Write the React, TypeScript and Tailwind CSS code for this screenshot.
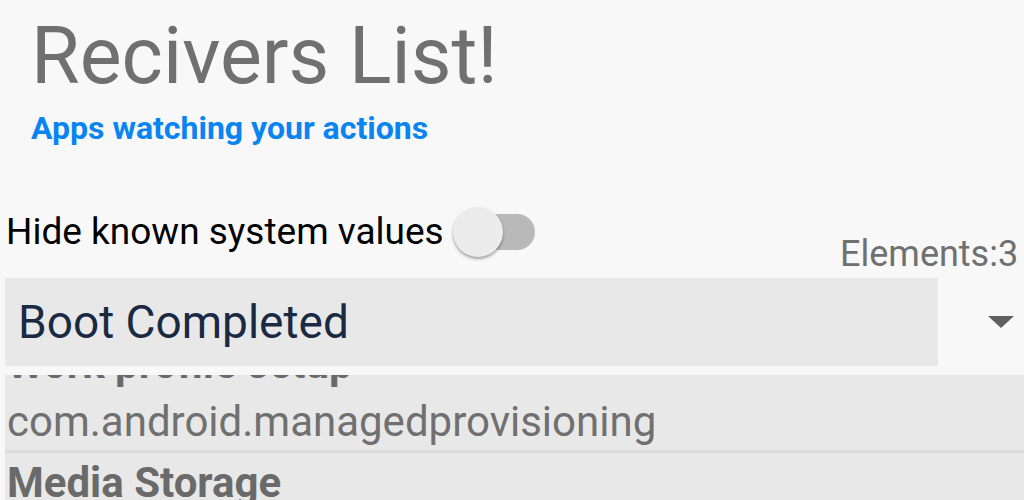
import React, { useState } from 'react';

const receivers = [
  { name: 'Work profile setup', pkg: 'com.android.managedprovisioning' },
  { name: 'Media Storage', pkg: 'com.android.providers.media' },
];

export default function App() {
  const [hideSystem, setHideSystem] = useState(false);

  return (
    <div className="w-[1024px] h-[500px] overflow-hidden bg-[#f8f8f8] font-['Roboto',sans-serif]">
      {/* Header */}
      <div className="pl-[31px] pt-[10px]">
        <h1 className="text-[79px] leading-[92px] text-[#707070] font-normal">Recivers List!</h1>
        <p className="text-[32px] leading-[40px] font-bold text-[#0a84f0] mt-[6px]">Apps watching your actions</p>
      </div>

      {/* Toggle row */}
      <div className="mt-[59px] pl-[6px] flex items-center h-[50px]">
        <span className="text-[37px] text-black whitespace-nowrap">Hide known system values</span>
        <button
          onClick={() => setHideSystem(!hideSystem)}
          className="relative ml-[9px] w-[82px] h-[50px]"
        >
          <span className="absolute left-[16px] top-[7px] w-[66px] h-[36px] rounded-full bg-[#b9b9b9]" />
          <span
            className={`absolute top-0 w-[50px] h-[50px] rounded-full bg-[#ececec] shadow-[0_2px_3px_rgba(0,0,0,0.35)] ${
              hideSystem ? 'left-[32px]' : 'left-0'
            }`}
          />
        </button>
      </div>

      <div className="-mt-[23px] h-[40px] overflow-hidden">
        <span className="block pl-[840px] text-[36px] leading-[40px] text-[#707070] whitespace-nowrap">Elements:3</span>
      </div>

      {/* Spinner */}
      <div className="flex items-center h-[88px] mt-[4px]">
        <div className="ml-[5px] w-[933px] h-full bg-[#e8e8e8] flex items-center pl-[13px]">
          <span className="text-[46px] text-[#1a2a42]">Boot Completed</span>
        </div>
        <div className="flex-1 flex justify-center pl-[40px]">
          <svg width="26" height="13" viewBox="0 0 26 13">
            <polygon points="0,0 26,0 13,12" fill="#606060" />
          </svg>
        </div>
      </div>

      {/* Receiver list (scrolled) */}
      <div className="mt-[9px] ml-[5px] h-[125px] overflow-hidden bg-[#e8e8e8]">
        <div className="-mt-[41px]">
          {receivers.map((r) => (
            <div key={r.pkg} className="border-b-[3px] border-[#dcdcdc]">
              <div className="text-[42px] leading-[60px] font-bold text-[#6a6a6a] pl-[2px] whitespace-nowrap">{r.name}</div>
              <div className="text-[42px] leading-[56px] text-[#707070] pl-[2px] whitespace-nowrap">{r.pkg}</div>
            </div>
          ))}
        </div>
      </div>
    </div>
  );
}
